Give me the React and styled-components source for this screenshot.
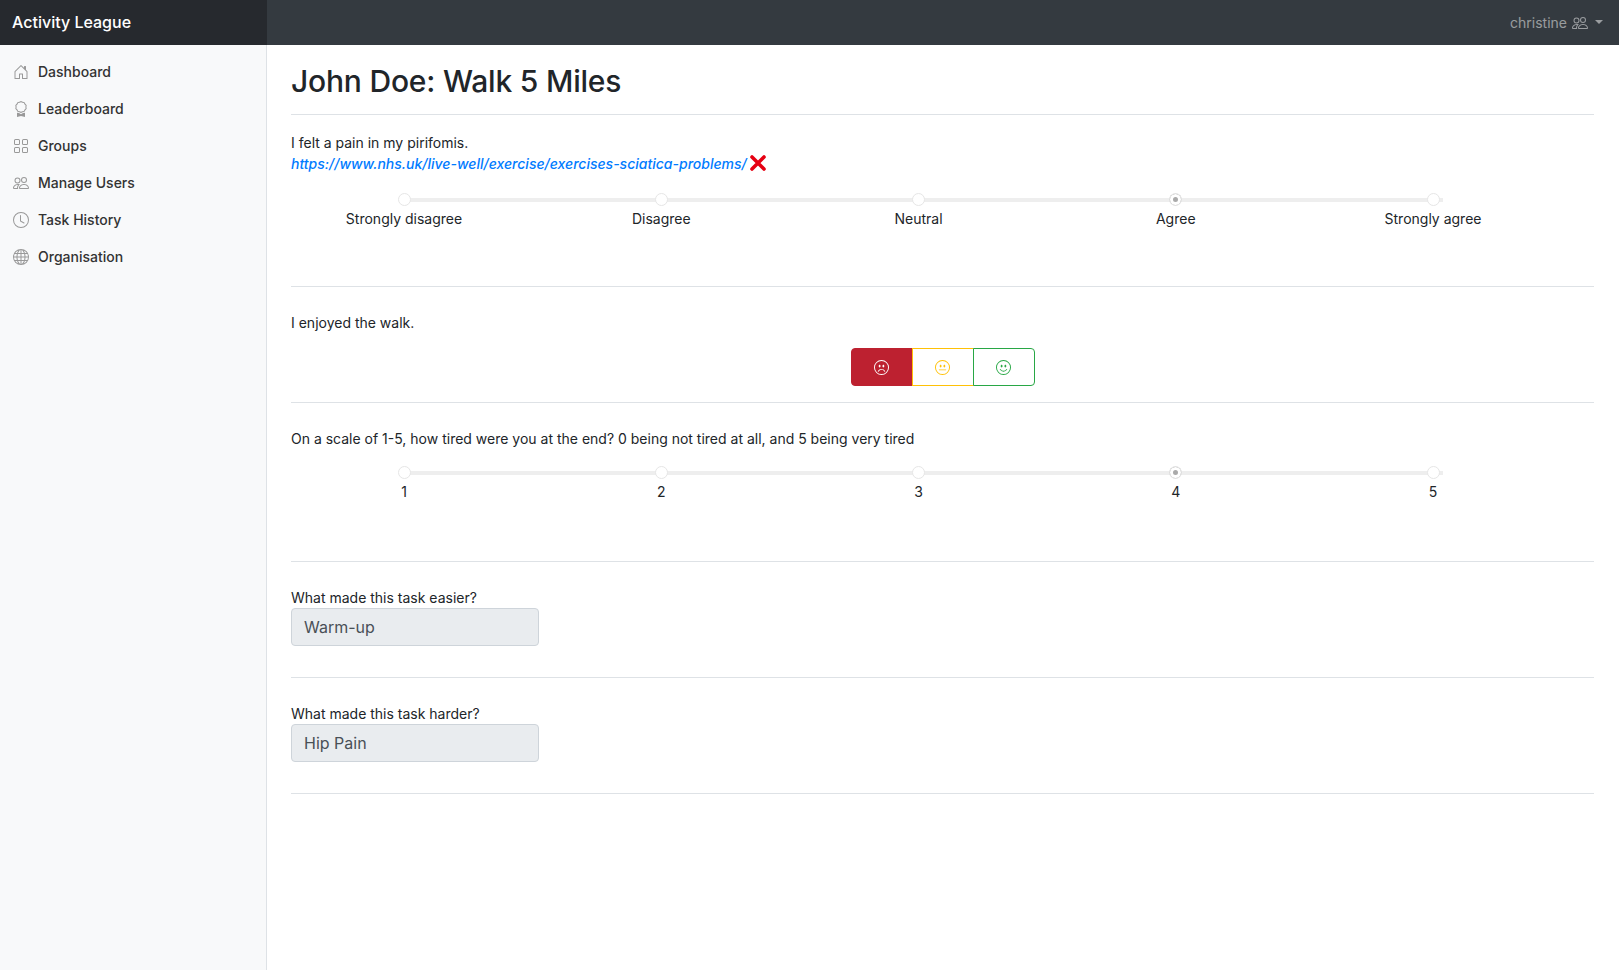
import React from 'react';
import styled, { createGlobalStyle } from 'styled-components';
import {
  BsHouseDoor, BsAward, BsGrid, BsPeople, BsClock, BsGlobe,
  BsEmojiFrown, BsEmojiNeutral, BsEmojiSmile,
} from 'react-icons/bs';

const GlobalStyle = createGlobalStyle`
  * { box-sizing: border-box; }
  html, body { margin: 0; height: 100%; }
  body {
    font-family: Inter, "Liberation Sans", sans-serif;
    font-size: 14px;
    line-height: 21px;
    color: #212529;
    background: #fff;
  }
`;

const Page = styled.div`
  height: 970px;
  display: flex;
  flex-direction: column;
  overflow: hidden;
`;

const TopBar = styled.header`
  height: 45px;
  flex: none;
  display: flex;
  align-items: center;
  justify-content: space-between;
  background: #343a40;
`;

const Brand = styled.a`
  width: 267px;
  height: 100%;
  display: flex;
  align-items: center;
  padding-left: 12px;
  background: #26292e;
  color: #fff;
  font-size: 16px;
  font-weight: 500;
`;

const UserMenu = styled.div`
  display: flex;
  align-items: center;
  padding-right: 16px;
  color: rgba(255, 255, 255, 0.5);
  font-size: 14px;
  svg { margin-left: 5px; font-size: 16px; }
`;

const Caret = styled.span`
  margin-left: 7px;
  margin-top: -2px;
  border-top: 4px solid rgba(255, 255, 255, 0.5);
  border-left: 4px solid transparent;
  border-right: 4px solid transparent;
`;

const Body = styled.div`
  flex: 1;
  display: flex;
  min-height: 0;
`;

const Sidebar = styled.nav`
  width: 267px;
  flex: none;
  padding-top: 8px;
  background: #f8f9fa;
  border-right: 1px solid #dee2e6;
`;

const NavItem = styled.a`
  height: 37px;
  display: flex;
  align-items: center;
  padding-left: 13px;
  gap: 9px;
  color: #333;
  font-size: 14px;
  font-weight: 500;
  svg { font-size: 16px; color: #999; flex: none; }
`;

const Main = styled.main`
  flex: 1;
  padding: 0 25px 0 24px;
`;

const Title = styled.h1`
  margin: 0;
  padding-top: 15px;
  height: 70px;
  font-size: 30px;
  line-height: 42px;
  font-weight: 500;
  letter-spacing: -0.2px;
  border-bottom: 1px solid #dee2e6;
`;

const Section = styled.section`
  height: ${(p) => p.$height}px;
  padding-top: ${(p) => p.$top}px;
  border-bottom: 1px solid #dee2e6;
`;

const Link = styled.a`
  color: #007bff;
  font-style: italic;
  font-weight: 500;
`;

const Cross = styled.svg`
  width: 18px;
  height: 18px;
  margin-left: 2px;
  vertical-align: -3px;
`;

const Slider = styled.div`
  position: relative;
  margin: ${(p) => p.$top}px 161px 0 113px;
`;

const Track = styled.div`
  position: absolute;
  top: 5px;
  left: 0;
  right: -10px;
  height: 4px;
  background: #eee;
`;

const Marks = styled.div`
  position: relative;
  display: flex;
  justify-content: space-between;
`;

const Mark = styled.div`
  width: 0;
  display: flex;
  flex-direction: column;
  align-items: center;
`;

const Dot = styled.span`
  width: 13px;
  height: 13px;
  flex: none;
  border-radius: 50%;
  background: ${(p) => (p.$active ? '#aaa' : '#fff')};
  border: 1px solid #e6e6e6;
  box-shadow: ${(p) => (p.$active ? 'inset 0 0 0 3px #fff' : 'none')};
`;

const MarkLabel = styled.span`
  margin-top: 2px;
  white-space: nowrap;
`;

const FaceRow = styled.div`
  display: flex;
  justify-content: center;
  margin-top: 15px;
`;

const FaceButton = styled.button`
  width: ${(p) => p.$width}px;
  height: 38px;
  padding: 0;
  margin-left: ${(p) => (p.$first ? 0 : -1)}px;
  display: flex;
  align-items: center;
  justify-content: center;
  font-size: 15px;
  background: ${(p) => (p.$filled ? p.$color : '#fff')};
  color: ${(p) => (p.$filled ? '#fff' : p.$color)};
  border: 1px solid ${(p) => p.$color};
  border-radius: ${(p) => p.$radius};
`;

const FieldLabel = styled.label`
  display: block;
  line-height: 21px;
`;

const Field = styled.input`
  display: block;
  width: 248px;
  height: 38px;
  margin-top: 0;
  padding: 6px 12px;
  font: inherit;
  font-size: 16px;
  color: #495057;
  background: #e9ecef;
  border: 1px solid #ced4da;
  border-radius: 4px;
`;

const navItems = [
  ['Dashboard', BsHouseDoor],
  ['Leaderboard', BsAward],
  ['Groups', BsGrid],
  ['Manage Users', BsPeople],
  ['Task History', BsClock],
  ['Organisation', BsGlobe],
];

const agreement = ['Strongly disagree', 'Disagree', 'Neutral', 'Agree', 'Strongly agree'];
const scale = ['1', '2', '3', '4', '5'];

const Scale = ({ labels, active, top }) => (
  <Slider $top={top}>
    <Track />
    <Marks>
      {labels.map((label, i) => (
        <Mark key={label}>
          <Dot $active={i === active} />
          <MarkLabel>{label}</MarkLabel>
        </Mark>
      ))}
    </Marks>
  </Slider>
);

const App = () => (
  <Page>
    <GlobalStyle />
    <TopBar>
      <Brand>Activity League</Brand>
      <UserMenu>
        christine <BsPeople /> <Caret />
      </UserMenu>
    </TopBar>
    <Body>
      <Sidebar>
        {navItems.map(([label, Icon]) => (
          <NavItem key={label}>
            <Icon />
            {label}
          </NavItem>
        ))}
      </Sidebar>
      <Main>
        <Title>John Doe: Walk 5 Miles</Title>
        <Section $height={172} $top={17}>
          I felt a pain in my pirifomis.
          <br />
          <Link>https://www.nhs.uk/live-well/exercise/exercises-sciatica-problems/</Link>
          <Cross viewBox="0 0 18 18">
            <path d="M3 3 L15 15 M15 3 L3 15" stroke="#e60012" strokeWidth="3.6" strokeLinecap="round" />
          </Cross>
          <Scale labels={agreement} active={3} top={19} />
        </Section>
        <Section $height={116} $top={25}>
          I enjoyed the walk.
          <FaceRow>
            <FaceButton $first $filled $width={62} $color="#bd2130" $radius="4px 0 0 4px"><BsEmojiFrown /></FaceButton>
            <FaceButton $width={62} $color="#ffc107" $radius="0"><BsEmojiNeutral /></FaceButton>
            <FaceButton $width={62} $color="#28a745" $radius="0 4px 4px 0"><BsEmojiSmile /></FaceButton>
          </FaceRow>
        </Section>
        <Section $height={159} $top={25}>
          On a scale of 1-5, how tired were you at the end? 0 being not tired at all, and 5 being very tired
          <Scale labels={scale} active={3} top={17} />
        </Section>
        <Section $height={116} $top={25}>
          <FieldLabel>What made this task easier?</FieldLabel>
          <Field disabled value="Warm-up" readOnly />
        </Section>
        <Section $height={116} $top={25}>
          <FieldLabel>What made this task harder?</FieldLabel>
          <Field disabled value="Hip Pain" readOnly />
        </Section>
      </Main>
    </Body>
  </Page>
);

export default App;
